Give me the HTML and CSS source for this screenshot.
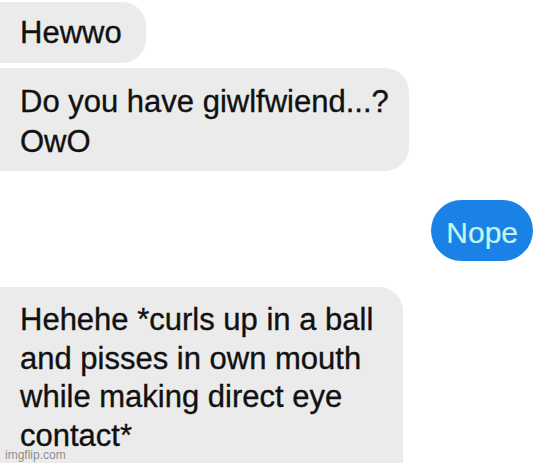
FILE: index.html
```html
<!DOCTYPE html>
<html lang="en">
<head>
<meta charset="utf-8">
<title>Chat</title>
<link rel="stylesheet" href="styles.css">
</head>
<body>
<main class="chat">
  <div class="bubble bubble--in bubble--first">Hewwo</div>
  <div class="bubble bubble--in bubble--second">Do you have giwlfwiend...?<br>OwO</div>
  <div class="bubble bubble--out">Nope</div>
  <div class="bubble bubble--in bubble--last">Hehehe *curls up in a ball<br>and pisses in own mouth<br>while making direct eye<br>contact*</div>
</main>
<div class="watermark">imgflip.com</div>
</body>
</html>
```

FILE: styles.css
```css
html, body {
  margin: 0;
  padding: 0;
  background: #ffffff;
  overflow: hidden;
  height: 463px;
}

body {
  position: relative;
  font-family: "Liberation Sans", Arial, sans-serif;
}

.chat {
  display: flex;
  flex-direction: column;
  align-items: flex-start;
  padding-top: 2px;
}

.bubble {
  font-size: 31px;
  line-height: 39px;
  color: #111111;
  white-space: nowrap;
  -webkit-text-stroke: 0.35px currentColor;
}

.bubble--in {
  background: #ebebeb;
  border-radius: 0 24px 24px 0;
  padding: 11px 24px 11px 20px;
}

.bubble--second {
  margin-top: 5px;
  padding: 14px 20px 9px 20px;
  line-height: 40px;
}

.bubble--out {
  align-self: flex-end;
  margin: 29px 5px 0 0;
  background: #1a82e6;
  color: #c6f3ee;
  font-size: 30px;
  line-height: 36px;
  padding: 15px 15px 10px 15px;
  border-radius: 31px;
  -webkit-text-stroke: 0.2px currentColor;
}

.bubble--last {
  margin-top: 26px;
  padding: 14px 30px 30px 20px;
  line-height: 38.5px;
}

.watermark {
  position: absolute;
  left: 5px;
  bottom: 1px;
  font-family: "Liberation Sans", Arial, sans-serif;
  font-size: 12px;
  color: rgba(70, 70, 70, 0.6);
}
```
